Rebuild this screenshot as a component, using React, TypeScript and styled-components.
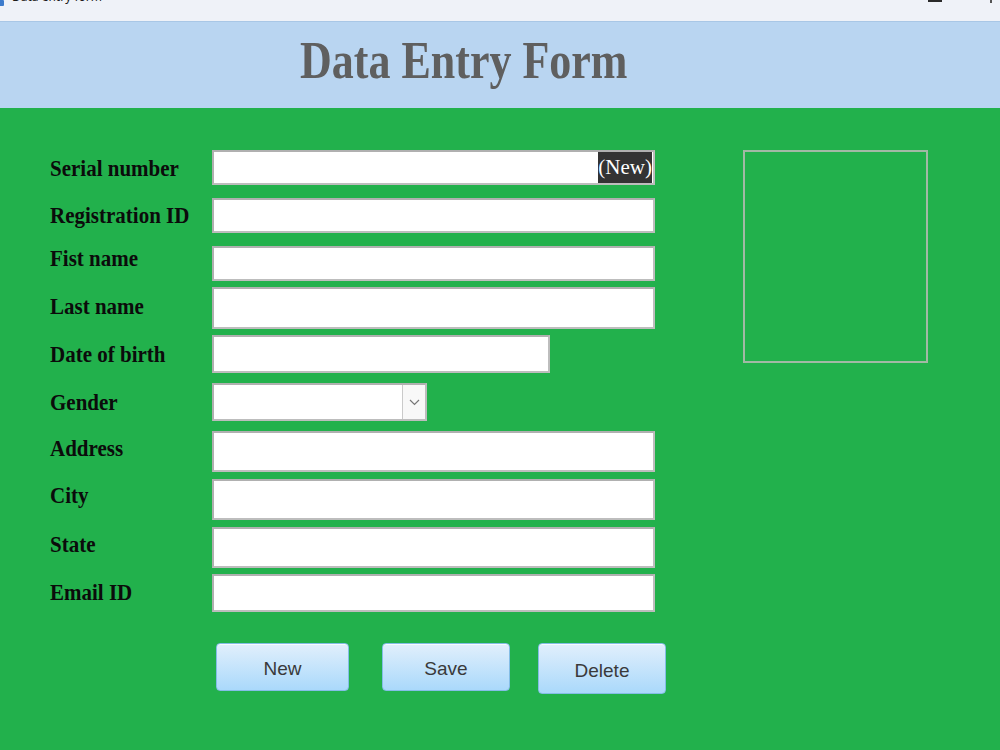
import styled, { createGlobalStyle, css } from 'styled-components';

const GlobalStyle = createGlobalStyle`
  html, body {
    margin: 0;
    padding: 0;
  }
  body {
    width: 1000px;
    height: 750px;
    overflow: hidden;
    background: #22b14c;
  }
`

const Window = styled.div`
  width: 1000px;
  height: 750px;
  display: flex;
  flex-direction: column;
  background: #22b14c;
`

// caption strip of the window, mostly scrolled off the top
const TitleBar = styled.div`
  height: 21px;
  flex-shrink: 0;
  display: flex;
  align-items: flex-start;
  overflow: hidden;
  background: #eff2f8;
  font-family: "Noto Sans", "Liberation Sans", sans-serif;
  font-size: 12px;
  color: #1c1c1c;
`

const AppIcon = styled.span`
  width: 4px;
  height: 6px;
  background: #3d7bcc;
  border-radius: 0 1px 1px 0;
`

const WindowTitle = styled.span`
  margin: -11px 0 0 8px;
  line-height: 16px;
  flex: 1;
`

const Minimize = styled.span`
  width: 14px;
  height: 2px;
  background: #2a2a2a;
  margin-right: 48px;
`

const CloseMark = styled.span`
  width: 2px;
  height: 3px;
  background: #555;
  margin-right: 8px;
`

const Header = styled.header`
  height: 87px;
  flex-shrink: 0;
  box-sizing: border-box;
  display: flex;
  align-items: center;
  padding: 0 0 8px 300px;
  background: #b9d5f1;
  border-top: 1px solid #a9c7e6;
`

const Heading = styled.h1`
  margin: 0;
  font-family: "Liberation Serif", "Times New Roman", serif;
  font-weight: 700;
  font-size: 44px;
  line-height: 1;
  color: #5f5f5f;
  transform: scaleY(1.21);
`

const Body = styled.main`
  flex: 1;
  display: flex;
  align-items: flex-start;
  padding: 42px 0 0 50px;
`

const Form = styled.form`
  width: 605px;
  flex-shrink: 0;
  display: flex;
  flex-direction: column;
`

const Row = styled.div<{ $gap: number }>`
  display: grid;
  grid-template-columns: 162px 1fr;
  align-items: center;
  margin-top: ${({ $gap }) => $gap}px;
`

const Label = styled.label<{ $shift?: number }>`
  display: inline-block;
  justify-self: start;
  white-space: nowrap;
  font-family: "Liberation Serif", "Times New Roman", serif;
  font-weight: 700;
  font-size: 21px;
  color: #0b0b0b;
  transform: translateY(${({ $shift }) => $shift ?? 0}px) scaleY(1.1);
`

const fieldFrame = css<{ $w?: number; $h: number }>`
  box-sizing: border-box;
  width: ${({ $w }) => $w ?? 443}px;
  height: ${({ $h }) => $h}px;
  margin: 0;
  background: #fff;
  border: 2px solid #bdbdbd;
  border-top-color: #b0b0b0;
  border-left-color: #b0b0b0;
`

const TextBox = styled.input<{ $w?: number; $h: number }>`
  ${fieldFrame}
  padding: 0 4px;
  outline: none;
  font: 18px "Liberation Serif", serif;
`

const SerialBox = styled.div<{ $w?: number; $h: number }>`
  ${fieldFrame}
  display: flex;
  justify-content: flex-end;
  align-items: stretch;
  padding-right: 1px;
`

const NewTag = styled.span`
  display: flex;
  align-items: center;
  background: #333;
  color: #fff;
  font-family: "Liberation Serif", "Times New Roman", serif;
  font-size: 21px;
`

const SelectBox = styled.div<{ $w?: number; $h: number }>`
  ${fieldFrame}
  display: flex;
  justify-content: flex-end;
  padding: 0;
`

const DropButton = styled.span`
  width: 23px;
  box-sizing: border-box;
  display: flex;
  align-items: center;
  justify-content: center;
  background: #f8f8f8;
  border-left: 1px solid #cacaca;
`

const PhotoFrame = styled.div`
  width: 185px;
  height: 213px;
  flex-shrink: 0;
  box-sizing: border-box;
  margin-left: 88px;
  border: 2px solid #a2b9a5;
`

const ButtonRow = styled.div`
  display: flex;
  align-items: flex-start;
  margin: 31px 0 0 166px;
`

const ActionButton = styled.button<{ $w: number; $h?: number; $ml?: number }>`
  flex-shrink: 0;
  box-sizing: border-box;
  width: ${({ $w }) => $w}px;
  height: ${({ $h }) => $h ?? 48}px;
  margin-left: ${({ $ml }) => $ml ?? 0}px;
  padding: 4px 0 0;
  border: 1px solid #84bde6;
  border-radius: 4px;
  background: linear-gradient(#e1effc, #aad9fb);
  box-shadow: inset 0 1px 0 rgba(255, 255, 255, 0.7);
  font-family: "Liberation Sans", Arial, sans-serif;
  font-size: 19px;
  color: #3a3a3a;
  cursor: pointer;
`

type Field = {
  label: string
  gap: number
  h: number
  w?: number
  shift?: number
}

const fields: Field[] = [
  { label: 'Registration ID', gap: 13, h: 35 },
  { label: 'Fist name', gap: 13, h: 35, shift: -5 },
  { label: 'Last name', gap: 6, h: 42, shift: -2 },
  { label: 'Date of birth', gap: 6, h: 38, w: 338 },
]

const addressFields: Field[] = [
  { label: 'Address', gap: 10, h: 41, shift: -3 },
  { label: 'City', gap: 7, h: 41, shift: -4 },
  { label: 'State', gap: 7, h: 41, shift: -3 },
  { label: 'Email ID', gap: 6, h: 38, shift: -1 },
]

const FieldRow = ({ label, gap, h, w, shift }: Field) => (
  <Row $gap={gap}>
    <Label $shift={shift}>{label}</Label>
    <TextBox $h={h} $w={w} />
  </Row>
)

export default function App() {
  return (
    <Window>
      <GlobalStyle />
      <TitleBar>
        <AppIcon />
        <WindowTitle>Data entry form</WindowTitle>
        <Minimize />
        <CloseMark />
      </TitleBar>

      <Header>
        <Heading>Data Entry Form</Heading>
      </Header>

      <Body>
        <Form onSubmit={e => e.preventDefault()}>
          <Row $gap={0}>
            <Label $shift={1}>Serial number</Label>
            <SerialBox $h={35}>
              <NewTag>(New)</NewTag>
            </SerialBox>
          </Row>

          {fields.map(f => <FieldRow key={f.label} {...f} />)}

          <Row $gap={10}>
            <Label>Gender</Label>
            <SelectBox $h={38} $w={215}>
              <DropButton>
                <svg width="11" height="7" viewBox="0 0 11 7">
                  <polyline points="1,1 5.5,5.5 10,1" fill="none" stroke="#777" strokeWidth="1.2" />
                </svg>
              </DropButton>
            </SelectBox>
          </Row>

          {addressFields.map(f => <FieldRow key={f.label} {...f} />)}

          <ButtonRow>
            <ActionButton type="button" $w={133}>New</ActionButton>
            <ActionButton type="submit" $w={128} $ml={33}>Save</ActionButton>
            <ActionButton type="button" $w={128} $h={51} $ml={28}>Delete</ActionButton>
          </ButtonRow>
        </Form>

        <PhotoFrame />
      </Body>
    </Window>
  )
}
